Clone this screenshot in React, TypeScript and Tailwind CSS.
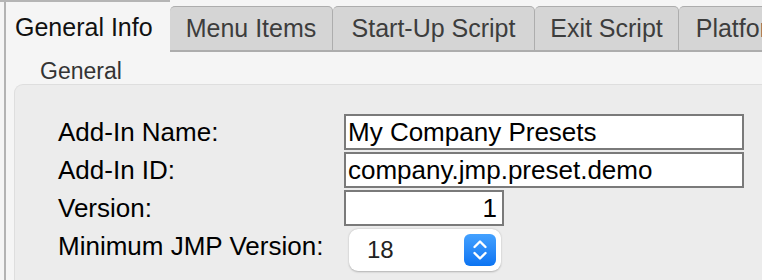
const tabs = [
  { label: "Menu Items", w: "w-[163px]" },
  { label: "Start-Up Script", w: "w-[202px]" },
  { label: "Exit Script", w: "w-[144px]" },
  { label: "Platforms", w: "w-[140px]" },
]

const TextField = ({ value, className = "" }: { value: string; className?: string }) => (
  <div
    className={`h-[36px] border-2 border-[#7a7a7a] bg-white flex items-center px-[2px] text-[26px] text-black ${className}`}
  >
    {value}
  </div>
)

const Stepper = () => (
  <div className="w-[32px] h-[32px] rounded-[6px] bg-gradient-to-b from-[#43a1ff] to-[#0a74f2] flex items-center justify-center">
    <svg width="18" height="26" viewBox="0 0 18 26" fill="none">
      <path d="M3.5 10 L9 4.5 L14.5 10" stroke="white" strokeWidth="2.4" strokeLinecap="round" strokeLinejoin="round" />
      <path d="M3.5 16 L9 21.5 L14.5 16" stroke="white" strokeWidth="2.4" strokeLinecap="round" strokeLinejoin="round" />
    </svg>
  </div>
)

export default function App() {
  return (
    <div className="w-[762px] h-[280px] overflow-hidden bg-[#f5f5f5] font-['Liberation_Sans',Arial,sans-serif]">
      {/* tab strip */}
      <div className="flex items-end h-[52px] whitespace-nowrap">
        <div className="w-[170px] h-[52px] shrink-0 border-t-2 border-[#b5b5b5] pl-[4px]">
          <div className="h-full border-l-2 border-[#b3b3b3] pl-[9px] pt-[10px] text-[25px] leading-[30px] text-[#111]">
            General Info
          </div>
        </div>
        {tabs.map((t) => (
          <div
            key={t.label}
            className={`${t.w} h-[46px] shrink-0 bg-[#d5d5d5] border border-b-2 border-[#adadad] border-l-0 first:border-l rounded-t-[5px] flex items-center justify-center pt-[1px] text-[25px] text-[#3d3d3d]`}
          >
            {t.label}
          </div>
        ))}
      </div>

      {/* panel */}
      <div className="ml-[4px] h-[228px] border-l-2 border-[#b3b3b3]">
        <div className="pl-[34px] pt-[6px] h-[32px] text-[23px] leading-[26px] text-[#333]">General</div>
        <div className="ml-[8px] h-[200px] bg-[#ececec] border border-[#dedede] border-r-0 border-b-0 rounded-tl-[9px] pl-[43px] pt-[29px] flex flex-col gap-[2px]">
          {[
            ["Add-In Name:", "My Company Presets"],
            ["Add-In ID:", "company.jmp.preset.demo"],
          ].map(([l, v]) => (
            <div key={l} className="flex items-center h-[36px]">
              <div className="w-[286px] text-[26px] text-black">{l}</div>
              <TextField value={v} className="w-[400px]" />
            </div>
          ))}
          <div className="flex items-center h-[36px]">
            <div className="w-[286px] text-[26px] text-black">Version:</div>
            <TextField value="1" className="w-[160px] justify-end pr-[5px]" />
          </div>
          <div className="flex items-start h-[44px]">
            <div className="w-[286px] h-[36px] flex items-center text-[26px] text-black">Minimum JMP Version:</div>
            <div className="ml-[5px] mt-[1px] w-[152px] h-[42px] bg-white rounded-[9px] shadow-[0_0.5px_2px_rgba(0,0,0,0.25)] flex items-center justify-between pl-[18px] pr-[5px]">
              <span className="text-[24px] text-[#222]">18</span>
              <Stepper />
            </div>
          </div>
        </div>
      </div>
    </div>
  )
}
